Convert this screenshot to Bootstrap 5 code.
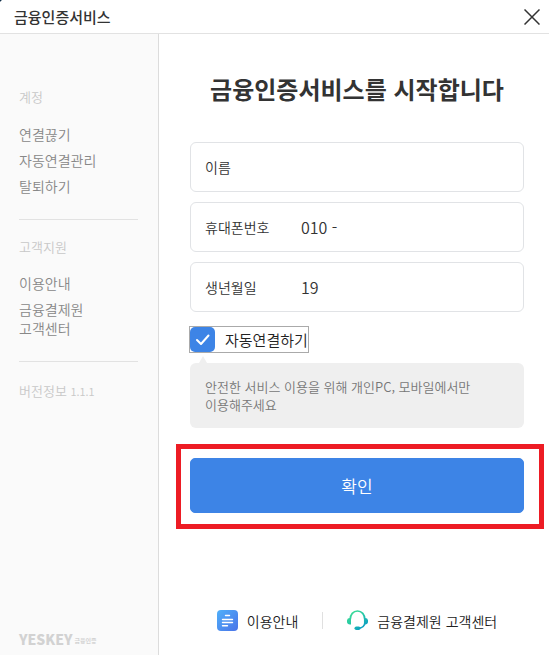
<!DOCTYPE html>
<html lang="ko">
<head>
<meta charset="utf-8">
<meta name="viewport" content="width=device-width, initial-scale=1">
<title>금융인증서비스</title>
<link href="https://cdn.jsdelivr.net/npm/bootstrap@5.3.0/dist/css/bootstrap.min.css" rel="stylesheet">
<style>
  body { font-family: "Noto Sans CJK KR", sans-serif; font-size: 14px; line-height: 20px; color: #333; }
  a { color: inherit; text-decoration: none; }
  .app-bar { height: 34px; padding: 0 9px 0 14px; border-bottom: 1px solid #e2e2e2;
    background: radial-gradient(circle at 0 0, #12304a 1px, transparent 2px); }
  .app-name { font-size: 15px; font-weight: 500; line-height: 33px; }
  .close-btn { line-height: 0; color: #333; }
  .side { width: 159px; padding: 55px 20px 4px 19px; background: #fafafa; border-right: 1px solid #dcdcdc; }
  .side-title { font-size: 13px; font-weight: 350; color: #c8c8c8; margin: 0 0 19px; }
  .side-list { font-weight: 350; color: #888; gap: 6px; margin-bottom: 23px; }
  .side-list .two-line { line-height: 19px; padding-top: 1px; }
  .side-rule { border-top: 1px solid #e2e2e2; margin-bottom: 19px; }
  .version-no { font-size: 11px; }
  .brand { gap: 2px; }
  .brand-name { font-size: 14px; font-weight: 900; color: #d2d2d2; }
  .brand-sub { font-size: 6px; font-weight: 700; color: #d2d2d2; padding-top: 4px; }
  .content { padding: 0 5px 0 17px; }
  .inset { padding: 0 20px 0 14px; }
  .headline { font-size: 24px; font-weight: 700; line-height: 36px; margin: 37px 0 35px; }
  .fields { gap: 10px; }
  .field-box { height: 50px; padding: 0 14px; border: 1px solid #e1e3e6; border-radius: 6px; }
  .field-box:focus-within { border-color: #3d84e6; }
  .field-name { width: 96px; font-weight: 350; }
  .field-value { border: 0; outline: 0; padding: 0; min-width: 0; font-size: 16px; font-weight: 350; color: #333; background: transparent; }
  .auto-link { margin: 14px 0 0 -1px; border: 1px solid #aaa; gap: 10px; font-size: 15px; line-height: 25px; font-weight: 350; color: #222; }
  .auto-link .form-check-input { width: 25px; height: 25px; margin: 0; border: 0; border-radius: 5px; }
  .auto-link .form-check-input:checked { background-color: #3d84e6;
    background-image: url("data:image/svg+xml,%3Csvg xmlns='http://www.w3.org/2000/svg' viewBox='0 0 25 25'%3E%3Cpath fill='none' stroke='%23fff' stroke-width='2' stroke-linecap='round' stroke-linejoin='round' d='M7 13l4 4 7.500-8.500'/%3E%3C/svg%3E"); }
  .note { margin-top: 10px; padding: 15px 15px 14px; border-radius: 6px; background: #efefef; color: #777; font-size: 13px; font-weight: 350; line-height: 18px; }
  .note::before { content: ""; position: absolute; left: 9px; top: -7px; border: solid transparent; border-width: 0 4px 7px; border-bottom-color: #efefef; }
  .marked { margin-top: 16px; padding: 9px 15px 11px 9px; border: 5px solid #ed1c24; }
  .btn-confirm { --bs-btn-color: #fff; --bs-btn-bg: #3d84e6; --bs-btn-hover-color: #fff; --bs-btn-hover-bg: #2f74d4; --bs-btn-border-color: #3d84e6;
    height: 55px; font-size: 17px; font-weight: 350; border-radius: 5px; }
  .help-links { padding-bottom: 24px; color: #222; font-weight: 350; }
  .help-links a { gap: 9px; }
  .help-sep { width: 1px; height: 17px; background: #e0e0e0; margin: 0 24px; }
</style>
</head>
<body class="d-flex flex-column min-vh-100">
<header class="app-bar d-flex align-items-center justify-content-between">
  <span class="app-name">금융인증서비스</span>
  <button type="button" class="close-btn btn border-0 p-0" aria-label="닫기">
    <svg width="16" height="16" viewBox="0 0 16 16" fill="none" stroke="currentColor" stroke-width="1.5"><path d="M.5.5l15 15M15.5.5l-15 15"/></svg>
  </button>
</header>
<div class="d-flex flex-grow-1">
  <aside class="side d-flex flex-column flex-shrink-0">
    <h2 class="side-title">계정</h2>
    <nav class="side-list d-flex flex-column" aria-label="계정">
      <a href="#">연결끊기</a>
      <a href="#">자동연결관리</a>
      <a href="#">탈퇴하기</a>
    </nav>
    <div class="side-rule"></div>
    <h2 class="side-title">고객지원</h2>
    <nav class="side-list d-flex flex-column" aria-label="고객지원">
      <a href="#">이용안내</a>
      <a href="#" class="two-line">금융결제원<br>고객센터</a>
    </nav>
    <div class="side-rule"></div>
    <p class="side-title">버전정보 <span class="version-no">1.1.1</span></p>
    <div class="brand d-flex align-items-center mt-auto text-nowrap"><span class="brand-name">YESKEY</span><span class="brand-sub">금융인증</span></div>
  </aside>
  <main class="content d-flex flex-column flex-grow-1">
    <form>
      <div class="inset">
        <h1 class="headline text-center text-nowrap">금융인증서비스를 시작합니다</h1>
        <div class="fields d-flex flex-column">
          <div class="field-box d-flex align-items-center">
            <label class="field-name" for="name">이름</label>
            <input class="field-value flex-grow-1" id="name" type="text">
          </div>
          <div class="field-box d-flex align-items-center">
            <label class="field-name" for="phone">휴대폰번호</label>
            <input class="field-value flex-grow-1" id="phone" type="tel" value="010 -">
          </div>
          <div class="field-box d-flex align-items-center">
            <label class="field-name" for="birth">생년월일</label>
            <input class="field-value flex-grow-1" id="birth" type="text" value="19">
          </div>
        </div>
        <div class="auto-link d-inline-flex align-items-center align-top">
          <input class="form-check-input" id="auto" type="checkbox" checked>
          <label for="auto">자동연결하기</label>
        </div>
        <div class="note position-relative">안전한 서비스 이용을 위해 개인PC, 모바일에서만<br>이용해주세요</div>
      </div>
      <div class="marked">
        <button type="submit" class="btn btn-confirm w-100">확인</button>
      </div>
    </form>
    <div class="help-links inset d-flex align-items-center justify-content-center mt-auto text-nowrap">
      <a href="#" class="d-flex align-items-center">
        <svg width="21" height="21" viewBox="0 0 21 21" fill="none" aria-hidden="true">
          <defs><linearGradient id="doc" x1="0" y1="0" x2="1" y2="1"><stop stop-color="#4fb0fa"/><stop offset="1" stop-color="#4a73e8"/></linearGradient></defs>
          <rect width="21" height="21" rx="4" fill="url(#doc)"/>
          <path d="M8.500 5.500h4M5.500 9.500h10M5.500 12.500h10M5.500 15.700h5" stroke="#fff" stroke-width="1.400" stroke-linecap="round"/>
        </svg>
        이용안내
      </a>
      <span class="help-sep"></span>
      <a href="#" class="d-flex align-items-center">
        <svg width="21" height="21" viewBox="0 0 21 21" fill="none" aria-hidden="true">
          <defs><linearGradient id="hs" gradientUnits="userSpaceOnUse" x1="4" y1="2" x2="17" y2="19"><stop stop-color="#3ddc97"/><stop offset=".5" stop-color="#22c4a8"/><stop offset="1" stop-color="#0897c8"/></linearGradient></defs>
          <path d="M3.200 9.500C3.200 4.500 6.300 1 10.500 1s7.300 3.500 7.300 8.500v3.500c0 2.600-2.600 5-5.600 5.200" stroke="url(#hs)" stroke-width="1.700"/>
          <path d="M4 8v6.500H3A3 3 0 0 1 0 11.300 3 3 0 0 1 3 8zM17 8v6.500h1a3 3 0 0 0 3-3.200A3 3 0 0 0 18 8z" fill="url(#hs)"/>
          <rect x="7.500" y="16.500" width="6" height="3.600" rx="1.800" fill="url(#hs)"/>
        </svg>
        금융결제원 고객센터
      </a>
    </div>
  </main>
</div>
<script src="https://cdn.jsdelivr.net/npm/bootstrap@5.3.0/dist/js/bootstrap.bundle.min.js"></script>
</body>
</html>
